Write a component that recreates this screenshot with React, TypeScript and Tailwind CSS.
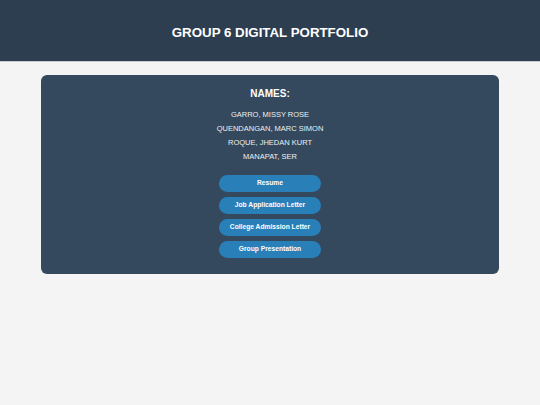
export default function App() {
  const names = ['GARRO, MISSY ROSE', 'QUENDANGAN, MARC SIMON', 'ROQUE, JHEDAN KURT', 'MANAPAT, SER']
  const links = ['Resume', 'Job Application Letter', 'College Admission Letter', 'Group Presentation']

  return (
    <div className="min-h-[405px] bg-[#f4f4f4] font-['Liberation_Sans',Arial,sans-serif]">
      <header className="h-[62px] bg-[#2c3e50] border-b border-[#c8ccd0] flex items-center justify-center">
        <h1 className="text-white font-bold text-[13.3px] leading-none mt-[4px]">GROUP 6 DIGITAL PORTFOLIO</h1>
      </header>

      <div className="px-[41px] pt-[13px]">
        <div className="bg-[#34495e] rounded-[6px] h-[199px] flex flex-col items-center pt-[14px]">
          <h2 className="text-white font-bold text-[10px] leading-none">NAMES:</h2>
          <div className="mt-[9px] flex flex-col items-center text-[#ecf0f1] text-[7.5px] leading-[14px]">
            {names.map((n) => (
              <p key={n}>{n}</p>
            ))}
          </div>
          <div className="mt-[11px] flex flex-col gap-[5px]">
            {links.map((l) => (
              <button
                key={l}
                className="w-[102px] h-[17px] rounded-full bg-[#2980b9] text-white font-bold text-[6.7px] leading-none"
              >
                {l}
              </button>
            ))}
          </div>
        </div>
      </div>
    </div>
  )
}
